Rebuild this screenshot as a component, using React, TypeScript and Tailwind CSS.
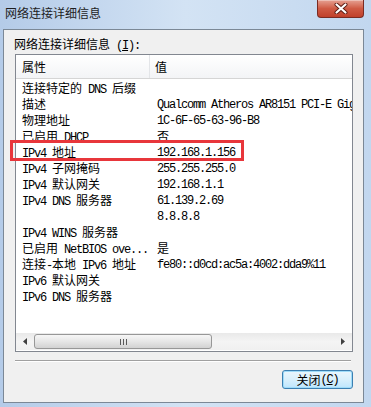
import React from "react";

const rows: [string, string][] = [
  ["连接特定的 DNS 后缀", ""],
  ["描述", "Qualcomm Atheros AR8151 PCI-E Gigabit Ethernet Controller (NDIS 6.20)"],
  ["物理地址", "1C-6F-65-63-96-B8"],
  ["已启用 DHCP", "否"],
  ["IPv4 地址", "192.168.1.156"],
  ["IPv4 子网掩码", "255.255.255.0"],
  ["IPv4 默认网关", "192.168.1.1"],
  ["IPv4 DNS 服务器", "61.139.2.69"],
  ["", "8.8.8.8"],
  ["IPv4 WINS 服务器", ""],
  ["已启用 NetBIOS ove...", "是"],
  ["连接-本地 IPv6 地址", "fe80::d0cd:ac5a:4002:dda9%11"],
  ["IPv6 默认网关", ""],
  ["IPv6 DNS 服务器", ""],
];

const cjk = /[\u3000-\u9fff\uff00-\uffef]/;

// SimSun look: 12px CJK, 6px-wide latin
function T({ s }: { s: string }) {
  const runs: { c: boolean; t: string }[] = [];
  for (const ch of s) {
    const c = cjk.test(ch);
    const last = runs[runs.length - 1];
    if (last && last.c === c) last.t += ch;
    else runs.push({ c, t: ch });
  }
  return (
    <>
      {runs.map((r, i) =>
        r.c ? (
          <span key={i} className="font-['Noto_Sans_CJK_SC',sans-serif]">
            {r.t}
          </span>
        ) : (
          <span key={i} className="font-['Liberation_Mono',monospace] tracking-[-1.2px] whitespace-pre">
            {r.t}
          </span>
        )
      )}
    </>
  );
}

function CloseGlyph() {
  return (
    <svg width="14" height="11" viewBox="0 0 14 11">
      <path d="M2.5 1.5 L11.5 9.5 M11.5 1.5 L2.5 9.5" stroke="#5a1a12" strokeWidth="4" strokeLinecap="round" />
      <path d="M2.5 1.5 L11.5 9.5 M11.5 1.5 L2.5 9.5" stroke="#ffffff" strokeWidth="2.2" strokeLinecap="round" />
    </svg>
  );
}

export default function App() {
  return (
    <div className="relative w-[371px] h-[407px] flex flex-col bg-gradient-to-r from-[#b4cbe8] via-[#d3e3f4] to-[#c2d7ef] text-black text-[12px] overflow-hidden">
      {/* title bar */}
      <div className="h-[29px] flex items-start shrink-0">
        <div className="pl-[5px] pt-[5px] text-[12px] leading-[16px] text-[#1e1e1e] font-['Noto_Sans_CJK_SC',sans-serif]">
          网络连接详细信息
        </div>
        <div className="ml-auto mr-[7px] w-[47px] h-[18px] rounded-b-[4px] border border-t-0 border-[#7a2b22] bg-gradient-to-b from-[#e5a092] via-[#cf5a44] to-[#c0402b] flex items-center justify-center shadow-[inset_0_1px_0_rgba(255,255,255,0.35)]">
          <CloseGlyph />
        </div>
      </div>

      {/* client area */}
      <div className="ml-[3px] mr-[7px] h-[374px] border border-[#7b8896] bg-[#f0f0f0] flex flex-col pl-[11px] pr-[10px]">
        <div className="h-[24px] pt-[6px] pl-[-1px] leading-[16px] -ml-px">
          <T s="网络连接详细信息 " />
          <span className="font-['Liberation_Mono',monospace] tracking-[-1.2px]">
            (<span className="underline">I</span>):
          </span>
        </div>

        {/* list view */}
        <div className="h-[298px] border border-[#828790] bg-white flex flex-col">
          <div className="h-[24px] shrink-0 flex bg-gradient-to-b from-white to-[#f3f4f6] border-b border-[#d5d5d5]">
            <div className="w-[134px] pl-[6px] leading-[23px] border-r border-[#e3e5e8]">
              <T s="属性" />
            </div>
            <div className="flex-1 pl-[5px] leading-[23px]">
              <T s="值" />
            </div>
          </div>
          <div className="flex-1 pt-px flex flex-col overflow-hidden">
            {rows.map(([k, v], i) => (
              <div key={i} className="h-[16px] leading-[16px] flex whitespace-nowrap">
                <div className="w-[134px] pl-[6px] overflow-hidden">
                  <T s={k} />
                </div>
                <div className="flex-1 pl-[7px] overflow-hidden">
                  <T s={v} />
                </div>
              </div>
            ))}
          </div>
          {/* horizontal scrollbar */}
          <div className="h-[17px] mb-px shrink-0 flex items-stretch bg-gradient-to-b from-[#e9e9e9] via-[#f4f4f4] to-[#f0f0f0]">
            <div className="w-[18px] flex items-center justify-center">
              <svg width="4" height="7" viewBox="0 0 4 7">
                <path d="M4 0 L0 3.5 L4 7 Z" fill="#404040" />
              </svg>
            </div>
            <div className="w-[178px] my-[1px] rounded-[3px] border border-[#979797] bg-gradient-to-b from-[#f6f6f6] via-[#e6e6e6] to-[#d2d2d2] flex items-center justify-center gap-[2px]">
              <div className="w-px h-[6px] bg-[#5a5a5a]" />
              <div className="w-px h-[6px] bg-[#5a5a5a]" />
              <div className="w-px h-[6px] bg-[#5a5a5a]" />
            </div>
            <div className="flex-1" />
            <div className="w-[18px] flex items-center justify-center">
              <svg width="4" height="7" viewBox="0 0 4 7">
                <path d="M0 0 L4 3.5 L0 7 Z" fill="#404040" />
              </svg>
            </div>
          </div>
        </div>

        {/* separator */}
        <div className="mt-[8px] w-[336px] h-px bg-[#a0a0a0] shadow-[0_1px_0_#ffffff]" />

        {/* button */}
        <div className="mt-[9px] self-end w-[71px] h-[19px] rounded-[3px] border border-[#3c7fb1] bg-gradient-to-b from-[#eaf6fd] via-[#d9f0fc] to-[#bee6fd] shadow-[inset_0_0_0_1px_#9fdcf9] flex items-center justify-center leading-[16px]">
          <T s="关闭" />
          <span className="font-['Liberation_Mono',monospace] tracking-[-1.2px]">
            (<span className="underline">C</span>)
          </span>
        </div>
      </div>

      {/* highlight box */}
      <div className="absolute left-[10px] top-[140px] w-[234px] h-[21px] border-[3px] border-[#e8363b]" />
    </div>
  );
}
